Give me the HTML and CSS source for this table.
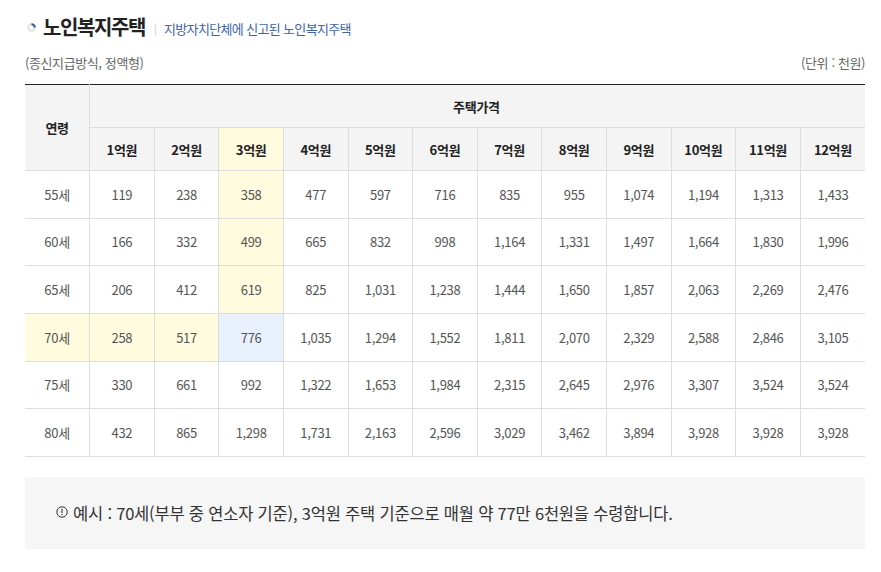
FILE: index.html
```html
<!DOCTYPE html>
<html lang="ko">
<head>
<meta charset="utf-8">
<title>노인복지주택</title>
<link rel="stylesheet" href="styles.css">
</head>
<body>
<div class="wrap">
  <div class="title-row">
    <svg class="title-icon" width="9" height="9" viewBox="0 0 10 10" aria-hidden="true">
      <circle cx="5" cy="5" r="3.6" fill="none" stroke="#e2e2e2" stroke-width="2.4"/>
      <path d="M5 1.4 A3.6 3.6 0 0 1 8.6 5" fill="none" stroke="#2c5aa8" stroke-width="2.4"/>
    </svg>
    <h2 class="title">노인복지주택</h2>
    <span class="sep">|</span>
    <span class="subtitle">지방자치단체에 신고된 노인복지주택</span>
  </div>
  <div class="info-row">
    <span>(종신지급방식, 정액형)</span>
    <span>(단위 : 천원)</span>
  </div>
  <table class="tbl">
    <thead>
      <tr>
        <th rowspan="2" class="age-h">연령</th>
        <th colspan="12" class="group-h">주택가격</th>
      </tr>
      <tr>
        <th>1억원</th><th>2억원</th><th class="hl-y">3억원</th><th>4억원</th><th>5억원</th><th>6억원</th><th>7억원</th><th>8억원</th><th>9억원</th><th>10억원</th><th>11억원</th><th>12억원</th>
      </tr>
    </thead>
    <tbody>
      <tr><td>55세</td><td>119</td><td>238</td><td class="hl-y">358</td><td>477</td><td>597</td><td>716</td><td>835</td><td>955</td><td>1,074</td><td>1,194</td><td>1,313</td><td>1,433</td></tr>
      <tr><td>60세</td><td>166</td><td>332</td><td class="hl-y">499</td><td>665</td><td>832</td><td>998</td><td>1,164</td><td>1,331</td><td>1,497</td><td>1,664</td><td>1,830</td><td>1,996</td></tr>
      <tr><td>65세</td><td>206</td><td>412</td><td class="hl-y">619</td><td>825</td><td>1,031</td><td>1,238</td><td>1,444</td><td>1,650</td><td>1,857</td><td>2,063</td><td>2,269</td><td>2,476</td></tr>
      <tr><td class="hl-y">70세</td><td class="hl-y">258</td><td class="hl-y">517</td><td class="hl-b">776</td><td>1,035</td><td>1,294</td><td>1,552</td><td>1,811</td><td>2,070</td><td>2,329</td><td>2,588</td><td>2,846</td><td>3,105</td></tr>
      <tr><td>75세</td><td>330</td><td>661</td><td>992</td><td>1,322</td><td>1,653</td><td>1,984</td><td>2,315</td><td>2,645</td><td>2,976</td><td>3,307</td><td>3,524</td><td>3,524</td></tr>
      <tr><td>80세</td><td>432</td><td>865</td><td>1,298</td><td>1,731</td><td>2,163</td><td>2,596</td><td>3,029</td><td>3,462</td><td>3,894</td><td>3,928</td><td>3,928</td><td>3,928</td></tr>
    </tbody>
  </table>
  <div class="note">
    <svg class="note-icon" width="12" height="12" viewBox="0 0 12 12" aria-hidden="true">
      <circle cx="6" cy="6" r="5.2" fill="none" stroke="#333" stroke-width="1"/>
      <rect x="5.45" y="2.8" width="1.1" height="4.2" fill="#333"/>
      <rect x="5.45" y="7.9" width="1.1" height="1.2" fill="#333"/>
    </svg>
    <span>예시 : 70세(부부 중 연소자 기준), 3억원 주택 기준으로 매월 약 77만 6천원을 수령합니다.</span>
  </div>
</div>
</body>
</html>
```

FILE: styles.css
```css
html, body {
  margin: 0;
  padding: 0;
  background: #fff;
}
body {
  font-family: "Noto Sans CJK KR", "Noto Sans", sans-serif;
  color: #333;
}
.wrap {
  width: 840px;
  margin-left: 25px;
  padding-top: 11px;
}
.title-row {
  display: flex;
  align-items: center;
  height: 32px;
}
.title-icon {
  margin-left: 2px;
  margin-right: 7px;
}
.title {
  margin: 0;
  font-size: 20px;
  font-weight: 700;
  color: #222;
  letter-spacing: -1.4px;
  line-height: 32px;
}
.sep {
  margin: 2px 7px 0 9px;
  color: #ccc;
  font-size: 11px;
}
.subtitle {
  font-size: 13px;
  color: #3c64a6;
  letter-spacing: -0.65px;
  margin-top: 2px;
}
.info-row {
  display: flex;
  justify-content: space-between;
  font-size: 13px;
  color: #666;
  margin-top: 11px;
  height: 18px;
  line-height: 18px;
  letter-spacing: -0.4px;
}
.tbl {
  margin-top: 12px;
  width: 840px;
  border-collapse: collapse;
  table-layout: fixed;
  border-top: 1px solid #222;
}
.tbl th, .tbl td {
  border: 1px solid #ddd;
  text-align: center;
  padding: 0;
}
.tbl tr > :first-child {
  border-left: none;
}
.tbl tr > :last-child {
  border-right: none;
}
.tbl thead tr:first-child th {
  border-top: none;
}
.tbl th {
  background: #f4f4f4;
  font-size: 13px;
  font-weight: 700;
  color: #222;
  height: 42px;
  letter-spacing: -0.3px;
}
.tbl th.group-h {
  text-align: left;
  padding-left: 363px;
}
.tbl td {
  font-size: 13px;
  color: #555;
  height: 46.67px;
  letter-spacing: -0.3px;
}
.tbl th.hl-y, .tbl td.hl-y {
  background: #fffbde;
}
.tbl td.hl-b {
  background: #e8f0fc;
}
.note {
  margin-top: 20px;
  background: #f6f6f6;
  height: 72px;
  display: flex;
  align-items: center;
  padding-left: 31px;
  font-size: 16.5px;
  color: #333;
  letter-spacing: -0.2px;
}
.note-icon {
  margin-right: 5px;
  margin-top: -2px;
}
```
